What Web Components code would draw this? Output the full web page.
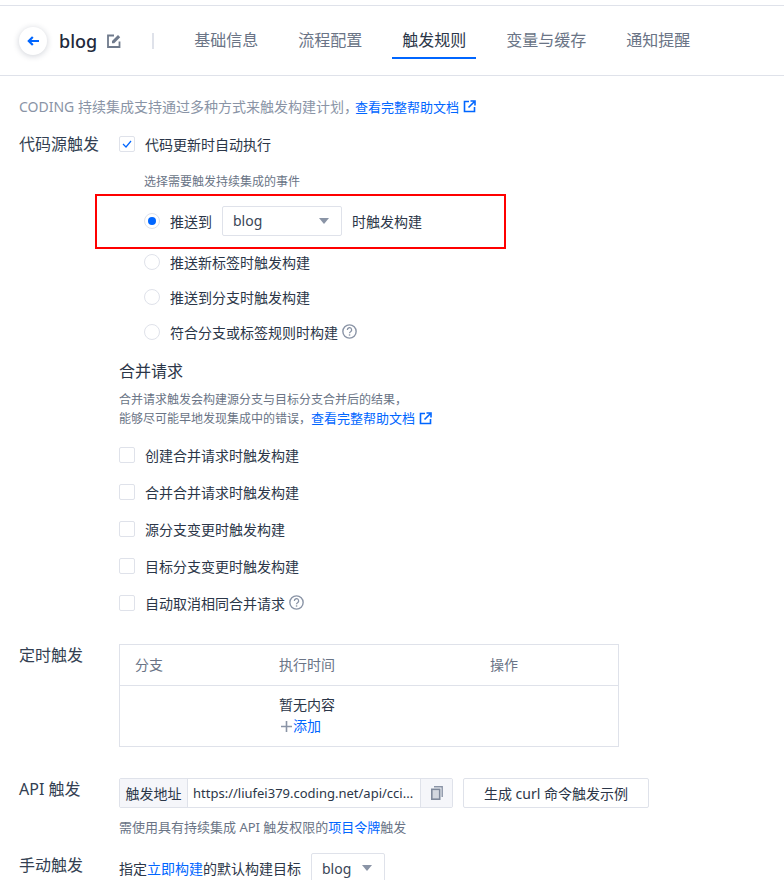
<!DOCTYPE html>
<html lang="zh">
<head>
<meta charset="utf-8">
<title>blog</title>
<style>
    html, body { margin: 0; height: 880px; overflow: hidden; background: #fff; }
    body {
        font-family: "Noto Sans", "Noto Sans CJK SC", sans-serif;
        font-size: 14px;
        color: #2b3648;
    }
</style>
</head>
<body>
<build-header></build-header>
<trigger-page></trigger-page>

<script>
const ICONS = {
    external: `<svg width="13" height="13" viewBox="0 0 13 13" fill="none"><path d="M6 1.500H1.500v10h10V7" stroke="#06f" stroke-width="1.600"/><path d="M5.500 7.500 11 2M7.500 1h4.500v4.500" stroke="#06f" stroke-width="1.600"/></svg>`,
    help: `<svg width="15" height="15" viewBox="0 0 14 14" fill="none"><circle cx="7" cy="7" r="6.200" stroke="#8a94a6" stroke-width="1.300"/><path d="M5 5.500a2 2 0 1 1 3 1.700c-.7.400-1 .8-1 1.500" stroke="#8a94a6" stroke-width="1.200"/><rect x="6.400" y="9.600" width="1.300" height="1.300" fill="#8a94a6"/></svg>`,
    caret: `<svg width="10" height="6" viewBox="0 0 10 6"><path d="M0 0h10L5 6z" fill="#8a94a6"/></svg>`
};

class BuildHeader extends HTMLElement {
    constructor() {
        super();
        this.attachShadow({ mode: "open" });
    }
    connectedCallback() {
        const tabs = ['基础信息', '流程配置', '触发规则', '变量与缓存', '通知提醒'];
        this.shadowRoot.innerHTML = `
            <style>
                :host {
                    display: flex;
                    align-items: center;
                    height: 69px;
                    margin-top: 5px;
                    padding-left: 19px;
                    border-top: 1px solid #dfe2ea;
                    border-bottom: 1px solid #dfe2ea;
                }
                .back {
                    width: 28px;
                    height: 28px;
                    border-radius: 50%;
                    background: #fff;
                    box-shadow: 0 1px 6px rgba(30, 45, 75, .22);
                    display: flex;
                    align-items: center;
                    justify-content: center;
                }
                .name {
                    margin-left: 12px;
                    font-size: 18px;
                    font-weight: 500;
                    color: #1f2a3c;
                }
                .edit { margin-left: 10px; display: flex; }
                .sep {
                    width: 2px;
                    height: 16px;
                    margin-left: 31px;
                    background: #dfe2ea;
                }
                nav {
                    display: flex;
                    gap: 20px;
                    margin-left: 30px;
                    align-self: stretch;
                }
                a {
                    position: relative;
                    padding: 0 10px;
                    font-size: 16px;
                    line-height: 69px;
                    color: #6a7486;
                }
                a.on { color: #2b3648; }
                a.on::after {
                    content: "";
                    position: absolute;
                    left: 0;
                    right: 0;
                    bottom: 16px;
                    height: 2px;
                    background: #06f;
                }
            </style>
            <div class="back">
                <svg width="12" height="10" viewBox="0 0 12 10" fill="none"><path d="M12 5H2M5.800 1 1.800 5l4 4" stroke="#06f" stroke-width="2.200"/></svg>
            </div>
            <span class="name">blog</span>
            <span class="edit">
                <svg width="14" height="14" viewBox="0 0 14 14" fill="none"><path d="M12.500 7.500V13H1V1.500h6" stroke="#6f7a8c" stroke-width="1.800"/><path d="M5 9.200V7l6-6 2.200 2.200-6 6z" fill="#6f7a8c"/></svg>
            </span>
            <span class="sep"></span>
            <nav>${tabs.map(t => `<a class="${t === '触发规则' ? 'on' : ''}">${t}</a>`).join('')}</nav>
        `;
    }
}
customElements.define('build-header', BuildHeader);

class HelpLink extends HTMLElement {
    constructor() {
        super();
        this.attachShadow({ mode: "open" });
    }
    connectedCallback() {
        this.shadowRoot.innerHTML = `
            <style>
                :host { display: inline-flex; align-items: center; gap: 4px; color: #06f; font-size: 13px; }
                svg { display: block; }
            </style>
            <span><slot></slot></span>${ICONS.external}
        `;
    }
}
customElements.define('help-link', HelpLink);

class CheckItem extends HTMLElement {
    constructor() {
        super();
        this.attachShadow({ mode: "open" });
    }
    connectedCallback() {
        const checked = this.hasAttribute('checked');
        const help = this.hasAttribute('help');
        this.shadowRoot.innerHTML = `
            <style>
                :host { display: flex; align-items: center; height: 37px; font-size: 14px; }
                .box {
                    width: 14px;
                    height: 14px;
                    margin-right: 10px;
                    border: 1px solid #dfe2ea;
                    border-radius: 2px;
                    display: flex;
                    align-items: center;
                    justify-content: center;
                }
                .help { margin-left: 4px; display: flex; }
            </style>
            <span class="box">${checked ? `<svg width="10" height="8" viewBox="0 0 10 8" fill="none"><path d="M1 4l3 3 5-6" stroke="#06f" stroke-width="1.200"/></svg>` : ''}</span>
            <slot></slot>
            ${help ? `<span class="help">${ICONS.help}</span>` : ''}
        `;
    }
}
customElements.define('check-item', CheckItem);

class RadioItem extends HTMLElement {
    constructor() {
        super();
        this.attachShadow({ mode: "open" });
    }
    connectedCallback() {
        const checked = this.hasAttribute('checked');
        const help = this.hasAttribute('help');
        this.shadowRoot.innerHTML = `
            <style>
                :host { display: flex; align-items: center; height: 35px; font-size: 14px; }
                .dot {
                    width: 14px;
                    height: 14px;
                    margin-right: 10px;
                    border: 1px solid #dfe2ea;
                    border-radius: 50%;
                    display: flex;
                    align-items: center;
                    justify-content: center;
                }
                .dot i { width: 8px; height: 8px; border-radius: 50%; background: #06f; }
                .help { margin-left: 4px; display: flex; }
            </style>
            <span class="dot">${checked ? '<i></i>' : ''}</span>
            <slot></slot>
            ${help ? `<span class="help">${ICONS.help}</span>` : ''}
        `;
    }
}
customElements.define('radio-item', RadioItem);

class SelectBox extends HTMLElement {
    constructor() {
        super();
        this.attachShadow({ mode: "open" });
    }
    connectedCallback() {
        this.shadowRoot.innerHTML = `
            <style>
                :host {
                    display: flex;
                    align-items: center;
                    justify-content: space-between;
                    box-sizing: border-box;
                    height: 30px;
                    padding: 0 12px 0 10px;
                    width: var(--select-width, 120px);
                    border: 1px solid #dfe2ea;
                    border-radius: 2px;
                    font-size: 14px;
                    color: #3a4557;
                }
                svg { display: block; }
            </style>
            <slot></slot>${ICONS.caret}
        `;
    }
}
customElements.define('select-box', SelectBox);

class FormRow extends HTMLElement {
    constructor() {
        super();
        this.attachShadow({ mode: "open" });
    }
    connectedCallback() {
        this.shadowRoot.innerHTML = `
            <style>
                :host { display: flex; align-items: flex-start; }
                .label {
                    flex: none;
                    width: 100px;
                    font-size: 16px;
                    line-height: 22px;
                    color: #333f52;
                }
                .body { flex: 1; min-width: 0; }
            </style>
            <div class="label">${this.getAttribute('label')}</div>
            <div class="body"><slot></slot></div>
        `;
    }
}
customElements.define('form-row', FormRow);

class ScheduleTable extends HTMLElement {
    constructor() {
        super();
        this.attachShadow({ mode: "open" });
    }
    connectedCallback() {
        this.shadowRoot.innerHTML = `
            <style>
                :host {
                    display: block;
                    width: 498px;
                    border: 1px solid #dfe2ea;
                    font-size: 14px;
                }
                .grid { display: grid; grid-template-columns: 159px 211px 1fr; }
                .head {
                    box-sizing: border-box;
                    height: 41px;
                    padding-bottom: 2px;
                    align-items: center;
                    color: #6a7486;
                    border-bottom: 1px solid #dfe2ea;
                }
                .head span:first-child { padding-left: 15px; }
                .empty { height: 60px; }
                .cell { grid-column: 2; padding-top: 8px; line-height: 21px; color: #2b3648; }
                .add { display: flex; align-items: center; color: #06f; }
                .add svg { margin: 1px 1px 0 2px; }
            </style>
            <div class="grid head"><span>分支</span><span>执行时间</span><span>操作</span></div>
            <div class="grid empty">
                <div class="cell">
                    暂无内容
                    <div class="add"><svg width="11" height="11" viewBox="0 0 11 11"><path d="M5.500 0v11M0 5.500h11" stroke="#8a94a6" stroke-width="1.600"/></svg>添加</div>
                </div>
            </div>
        `;
    }
}
customElements.define('schedule-table', ScheduleTable);

class ApiField extends HTMLElement {
    constructor() {
        super();
        this.attachShadow({ mode: "open" });
    }
    connectedCallback() {
        this.shadowRoot.innerHTML = `
            <style>
                :host { display: flex; gap: 10px; height: 30px; font-size: 14px; color: #2b3648; }
                .group { display: flex; box-sizing: border-box; width: 334px; border: 1px solid #dfe2ea; border-radius: 2px; }
                .addon { display: flex; align-items: center; justify-content: center; background: #f5f6fa; }
                .title { width: 67px; border-right: 1px solid #dfe2ea; }
                .value { flex: 1; display: flex; align-items: center; padding-left: 5px; white-space: nowrap; font-size: 13px; }
                .copy { width: 31px; border-left: 1px solid #dfe2ea; }
                button {
                    width: 186px;
                    padding: 0;
                    background: #fff;
                    border: 1px solid #dfe2ea;
                    border-radius: 2px;
                    font: inherit;
                    color: inherit;
                }
            </style>
            <div class="group">
                <span class="addon title">触发地址</span>
                <span class="value">https://liufei379.coding.net/api/cci...</span>
                <span class="addon copy">
                    <svg width="12" height="14" viewBox="0 0 12 14" fill="none"><path d="M3 .8h8.200V11" stroke="#8a94a6" stroke-width="1.400"/><rect x=".8" y="3.300" width="7.900" height="9.900" fill="#d3d7df" stroke="#7f899b" stroke-width="1.600"/></svg>
                </span>
            </div>
            <button>生成 curl 命令触发示例</button>
        `;
    }
}
customElements.define('api-field', ApiField);

class TriggerPage extends HTMLElement {
    constructor() {
        super();
        this.attachShadow({ mode: "open" });
    }
    connectedCallback() {
        this.shadowRoot.innerHTML = `
            <style>
                :host { display: block; padding: 0 19px; }
                .muted { color: #8a94a6; }
                .intro {
                    display: flex;
                    align-items: center;
                    height: 20px;
                    margin-top: 20px;
                    font-size: 14px;
                    white-space: pre;
                }
                .intro help-link { margin-left: -3px; }
                .source { margin-top: 17px; }
                .source > check-item { height: 22px; }
                .hint { margin: 19px 0 0 25px; font-size: 12px; line-height: 16px; color: #6a7486; }
                .radios { position: relative; margin: 7px 0 0 25px; }
                .radios radio-item:first-child { height: 47px; }
                .mark {
                    position: absolute;
                    left: -49px;
                    top: -3px;
                    width: 407px;
                    height: 51px;
                    border: 2px solid #f00;
                    pointer-events: none;
                }
                .pick { margin: 0 10px; --select-width: 120px; }
                h3 { margin: 11px 0 0; font-size: 16px; font-weight: 400; line-height: 22px; color: #2b3648; }
                .merge-note { margin: 8px 0 0; font-size: 12px; line-height: 19px; color: #6a7486; }
                .checks { margin-top: 8px; }
                .timer { margin-top: 23px; }
                .api { margin-top: 31px; }
                .note { margin: 10px 0 0; font-size: 13px; line-height: 18px; color: #6a7486; }
                a { color: #06f; }
                .manual { margin-top: 18px; }
                .manual-line { display: flex; align-items: center; gap: 10px; margin-top: -1px; font-size: 14px; }
                .manual-line select-box { --select-width: 74px; flex: none; }
            </style>
            <div class="intro"><span class="muted">CODING 持续集成支持通过多种方式来触发构建计划，</span><help-link>查看完整帮助文档</help-link></div>

            <form-row class="source" label="代码源触发">
                <check-item checked>代码更新时自动执行</check-item>
                <p class="hint">选择需要触发持续集成的事件</p>
                <div class="radios">
                    <radio-item checked>推送到<select-box class="pick">blog</select-box>时触发构建</radio-item>
                    <radio-item>推送新标签时触发构建</radio-item>
                    <radio-item>推送到分支时触发构建</radio-item>
                    <radio-item help>符合分支或标签规则时构建</radio-item>
                    <div class="mark"></div>
                </div>
                <h3>合并请求</h3>
                <p class="merge-note">合并请求触发会构建源分支与目标分支合并后的结果，<br>能够尽可能早地发现集成中的错误，<help-link>查看完整帮助文档</help-link></p>
                <div class="checks">
                    <check-item>创建合并请求时触发构建</check-item>
                    <check-item>合并合并请求时触发构建</check-item>
                    <check-item>源分支变更时触发构建</check-item>
                    <check-item>目标分支变更时触发构建</check-item>
                    <check-item help>自动取消相同合并请求</check-item>
                </div>
            </form-row>

            <form-row class="timer" label="定时触发">
                <schedule-table></schedule-table>
            </form-row>

            <form-row class="api" label="API 触发">
                <api-field></api-field>
                <p class="note">需使用具有持续集成 API 触发权限的<a>项目令牌</a>触发</p>
            </form-row>

            <form-row class="manual" label="手动触发">
                <div class="manual-line"><span>指定<a>立即构建</a>的默认构建目标</span><select-box>blog</select-box></div>
            </form-row>
        `;
    }
}
customElements.define('trigger-page', TriggerPage);
</script>
</body>
</html>
